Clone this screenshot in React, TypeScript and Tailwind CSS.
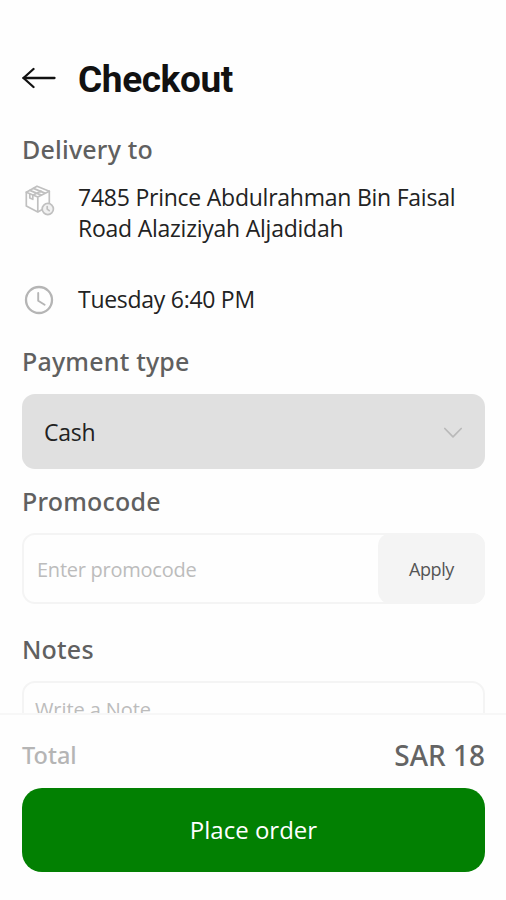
import * as React from "react";

function BackIcon() {
  return (
    <svg width="34" height="22" viewBox="0 0 34 22" fill="none" stroke="#111111" strokeWidth="2.3" strokeLinecap="round" strokeLinejoin="round">
      <path d="M32.5 11H1.5" />
      <path d="M11.5 2L1.5 11l10 9" />
    </svg>
  );
}

// parcel with a small clock badge in the corner
function ParcelIcon() {
  return (
    <svg width="30" height="31" viewBox="0 0 30 31" fill="none" stroke="#c0c0c0" strokeWidth="1.7" strokeLinejoin="round" strokeLinecap="round">
      <path d="M1.3 7.2L12 1.2l12.3 5v14.3L12.8 27 1.3 21z" />
      <path d="M1.3 7.2l11.5 4.8 11.5-5.8M12.8 12v14.5" />
      <path d="M4.8 5.4l11.5 4.7M8.4 3.4l11.5 4.7M4.8 9v4l3 1.3v-4L16 6" />
      <circle cx="22.8" cy="24" r="5.6" fill="#f1f1f1" />
      <path d="M22.2 21.5v2.6l2 1.6" />
    </svg>
  );
}

function ClockIcon() {
  return (
    <svg width="30" height="30" viewBox="0 0 30 30" fill="none" stroke="#b5b5b5" strokeLinecap="round" strokeLinejoin="round">
      <circle cx="15" cy="15" r="13" strokeWidth="2.3" />
      <path d="M14.2 8v7.7l6.4 4.1" strokeWidth="1.9" />
    </svg>
  );
}

function ChevronIcon() {
  return (
    <svg width="20" height="12" viewBox="0 0 20 12" fill="none" stroke="#b9b9b9" strokeWidth="1.7" strokeLinecap="round" strokeLinejoin="round">
      <path d="M1.8 1.5L10 9.8l8.2-8.3" />
    </svg>
  );
}

function SectionTitle({ children }: { children: React.ReactNode }) {
  return (
    <h2 className="h-8 font-['Noto_Sans',sans-serif] text-[25px] leading-[31px] font-medium tracking-[0.2px] text-[#606060] whitespace-nowrap">
      {children}
    </h2>
  );
}

export default function App() {
  return (
    <div className="flex h-[900px] w-[506px] flex-col overflow-hidden bg-[#fefefe] font-['Open_Sans','Noto_Sans',sans-serif]">
      <main className="flex h-[713px] shrink-0 flex-col overflow-hidden pr-[21px] pl-[22px] pt-[58px]">
        <header className="flex h-10 shrink-0 items-center">
          <BackIcon />
          <h1 className="ml-[22px] mt-1 font-['Roboto',sans-serif] text-[37px] leading-10 font-bold tracking-[-0.4px] text-[#111111]">Checkout</h1>
        </header>

        <section className="mt-9 shrink-0">
          <SectionTitle>Delivery to</SectionTitle>
          <div className="mt-4 flex items-start">
            <div className="w-14 shrink-0 pl-[3px] pt-[3px]">
              <ParcelIcon />
            </div>
            <p className="text-[23px] leading-[31px] tracking-[-0.24px] text-[#222222] whitespace-nowrap">
              7485 Prince Abdulrahman Bin Faisal<br />
              Road Alaziziyah Aljadidah
            </p>
          </div>
          <div className="mt-[39px] flex h-8 items-center">
            <div className="w-14 shrink-0 pl-0.5 pt-0.5">
              <ClockIcon />
            </div>
            <p className="text-[23px] leading-8 tracking-[-0.28px] text-[#222222]">Tuesday 6:40 PM</p>
          </div>
        </section>

        <section className="mt-[31px] shrink-0">
          <SectionTitle>Payment type</SectionTitle>
          <button className="mt-4 flex h-[75px] w-full items-center justify-between rounded-[13px] bg-[#e0e0e0] pl-[22px] pr-[22px] pt-0.5 text-[23px] tracking-[-0.28px] text-[#222222]">
            Cash
            <ChevronIcon />
          </button>
        </section>

        <section className="mt-[17px] shrink-0">
          <SectionTitle>Promocode</SectionTitle>
          <div className="mt-[15px] flex h-[71px] rounded-[13px] border-2 border-[#f4f4f4]">
            <div className="flex flex-1 items-center pl-[13px] pt-0.5 text-[20px] tracking-[-0.25px] text-[#bcbcbc]">Enter promocode</div>
            <button className="-my-0.5 -mr-0.5 w-[107px] rounded-[13px] bg-[#f4f4f4] pt-0.5 text-[18px] tracking-[-0.4px] text-[#555555]">Apply</button>
          </div>
        </section>

        <section className="mt-[30px] shrink-0">
          <SectionTitle>Notes</SectionTitle>
          <div className="mt-[15px] h-[110px] rounded-[13px] border-2 border-[#f4f4f4] pl-[11px] pt-[13px] text-[20px] leading-7 tracking-[-0.1px] text-[#bcbcbc]">
            Write a Note
          </div>
        </section>
      </main>

      <footer className="flex flex-1 flex-col border-t-2 border-[#f7f7f7] pr-[21px] pl-[22px] pt-[22px]">
        <div className="flex h-9 items-center justify-between font-['Noto_Sans',sans-serif]">
          <span className="pt-0.5 text-[23.5px] font-medium text-[#b5b5b5]">Total</span>
          <span className="text-[28px] font-medium text-[#646464]">SAR 18</span>
        </div>
        <button className="mt-[15px] h-[84px] w-full rounded-[20px] bg-[#028002] text-[24px] text-white">Place order</button>
      </footer>
    </div>
  );
}
